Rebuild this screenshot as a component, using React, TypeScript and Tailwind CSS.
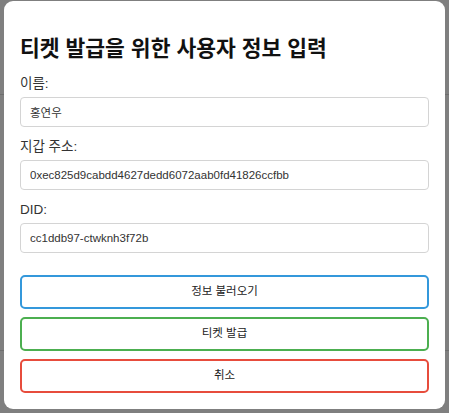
import React, { useState } from 'react';

const font = { fontFamily: '"Liberation Sans", "Noto Sans CJK KR", sans-serif' };

function Field({ label, value, onChange }: { label: string; value: string; onChange: (v: string) => void }) {
  return (
    <div className="mt-3 first:mt-0">
      <label className="block text-[13.5px] leading-4 text-[#333] mb-[5px]">{label}</label>
      <input
        value={value}
        onChange={e => onChange(e.target.value)}
        className="w-full h-[30px] px-[9px] text-[11.5px] text-[#333] bg-white border border-[#d4d4d4] rounded-[4px] outline-none"
      />
    </div>
  );
}

export default function App() {
  const [name, setName] = useState('홍연우');
  const [wallet, setWallet] = useState('0xec825d9cabdd4627dedd6072aab0fd41826ccfbb');
  const [did, setDid] = useState('cc1ddb97-ctwknh3f72b');

  return (
    <div className="relative w-full h-[413px] overflow-hidden bg-white" style={font}>
      {/* page behind the modal */}
      <div className="h-[95px] border-b border-[#ddd]" />
      <div className="absolute left-0 right-0 top-[350px] border-t border-[#ddd]" />

      {/* overlay + modal */}
      <div className="absolute inset-0 bg-black/50 flex justify-center items-start pt-px">
        <div className="w-[441px] bg-white rounded-[9px] p-4">
          <h2 className="mt-[18px] mb-[13px] text-[21.5px] leading-7 font-bold text-[#111]">
            티켓 발급을 위한 사용자 정보 입력
          </h2>

          <div>
            <Field label="이름:" value={name} onChange={setName} />
            <Field label="지갑 주소:" value={wallet} onChange={setWallet} />
            <Field label="DID:" value={did} onChange={setDid} />
          </div>

          <div className="mt-[22px] flex flex-col gap-2">
            <button className="h-[34px] w-full bg-white border-2 border-[#3498db] rounded-[5px] text-[11.5px] text-[#222]">
              정보 불러오기
            </button>
            <button className="h-[34px] w-full bg-white border-2 border-[#4caf50] rounded-[5px] text-[11.5px] text-[#222]">
              티켓 발급
            </button>
            <button className="h-[34px] w-full bg-white border-2 border-[#e74c3c] rounded-[5px] text-[11.5px] text-[#222]">
              취소
            </button>
          </div>
        </div>
      </div>
    </div>
  );
}
